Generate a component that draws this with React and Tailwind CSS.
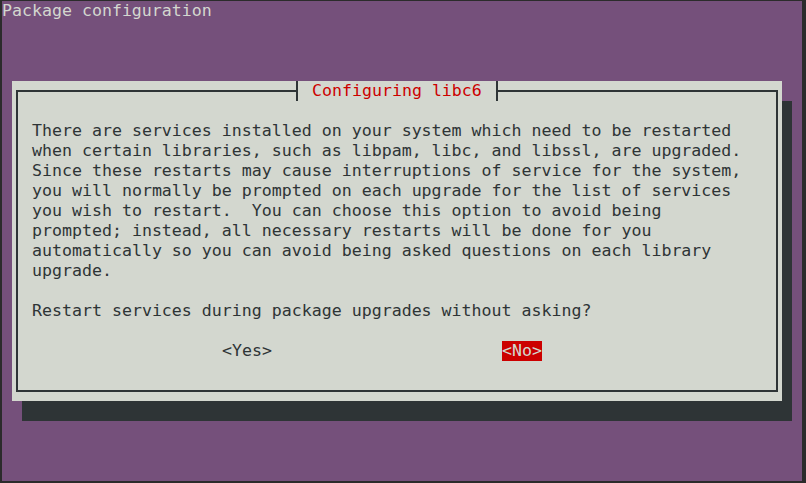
import React from "react";

const lines = [
  "There are services installed on your system which need to be restarted",
  "when certain libraries, such as libpam, libc, and libssl, are upgraded.",
  "Since these restarts may cause interruptions of service for the system,",
  "you will normally be prompted on each upgrade for the list of services",
  "you wish to restart.  You can choose this option to avoid being",
  "prompted; instead, all necessary restarts will be done for you",
  "automatically so you can avoid being asked questions on each library",
  "upgrade.",
  "",
  "Restart services during package upgrades without asking?",
  "",
];

function Tee({ side }) {
  // box-drawing ┤ / ├ in one 10x20 cell
  return (
    <svg width="10" height="20" viewBox="0 0 10 20" className="block">
      <rect x="4" y="0" width="2" height="20" fill="#2e3436" />
      {side === "left" ? (
        <rect x="0" y="9" width="5" height="2" fill="#2e3436" />
      ) : (
        <rect x="5" y="9" width="5" height="2" fill="#2e3436" />
      )}
    </svg>
  );
}

export default function App() {
  return (
    <div
      className="w-[806px] h-[483px] bg-[#2b2b2b] pt-[1px] pl-[2px] pr-[4px] pb-[2px] text-[16.6px] leading-[20px]"
      style={{ fontFamily: '"DejaVu Sans Mono", "Liberation Mono", monospace' }}
    >
      <div className="w-[800px] h-[480px] bg-[#75507b] flex flex-col">
        <div className="h-[20px] text-[#d3d7cf] whitespace-pre">Package configuration</div>

        {/* dialog */}
        <div className="relative mt-[60px] ml-[10px] w-[770px] h-[320px] bg-[#d3d7cf] shadow-[10px_20px_0_#2e3436] px-[4px] py-[9px]">
          <div className="h-full border-2 border-[#2e3436] pt-[29px] pl-[14px] text-[#2e3436]">
            {lines.map((l, i) => (
              <div key={i} className="h-[20px] whitespace-pre">
                {l}
              </div>
            ))}
            <div className="h-[20px] flex pl-[190px] gap-[230px] whitespace-pre">
              <span>&lt;Yes&gt;</span>
              <span className="bg-[#cc0000] text-[#d3d7cf]">&lt;No&gt;</span>
            </div>
          </div>

          {/* title sits over the top border */}
          <div className="absolute top-0 left-[280px] h-[20px] flex bg-[#d3d7cf]">
            <Tee side="left" />
            <span className="w-[10px]" />
            <span className="text-[#cc0000] whitespace-pre">Configuring libc6</span>
            <span className="w-[10px]" />
            <Tee side="right" />
          </div>
        </div>
      </div>
    </div>
  );
}
